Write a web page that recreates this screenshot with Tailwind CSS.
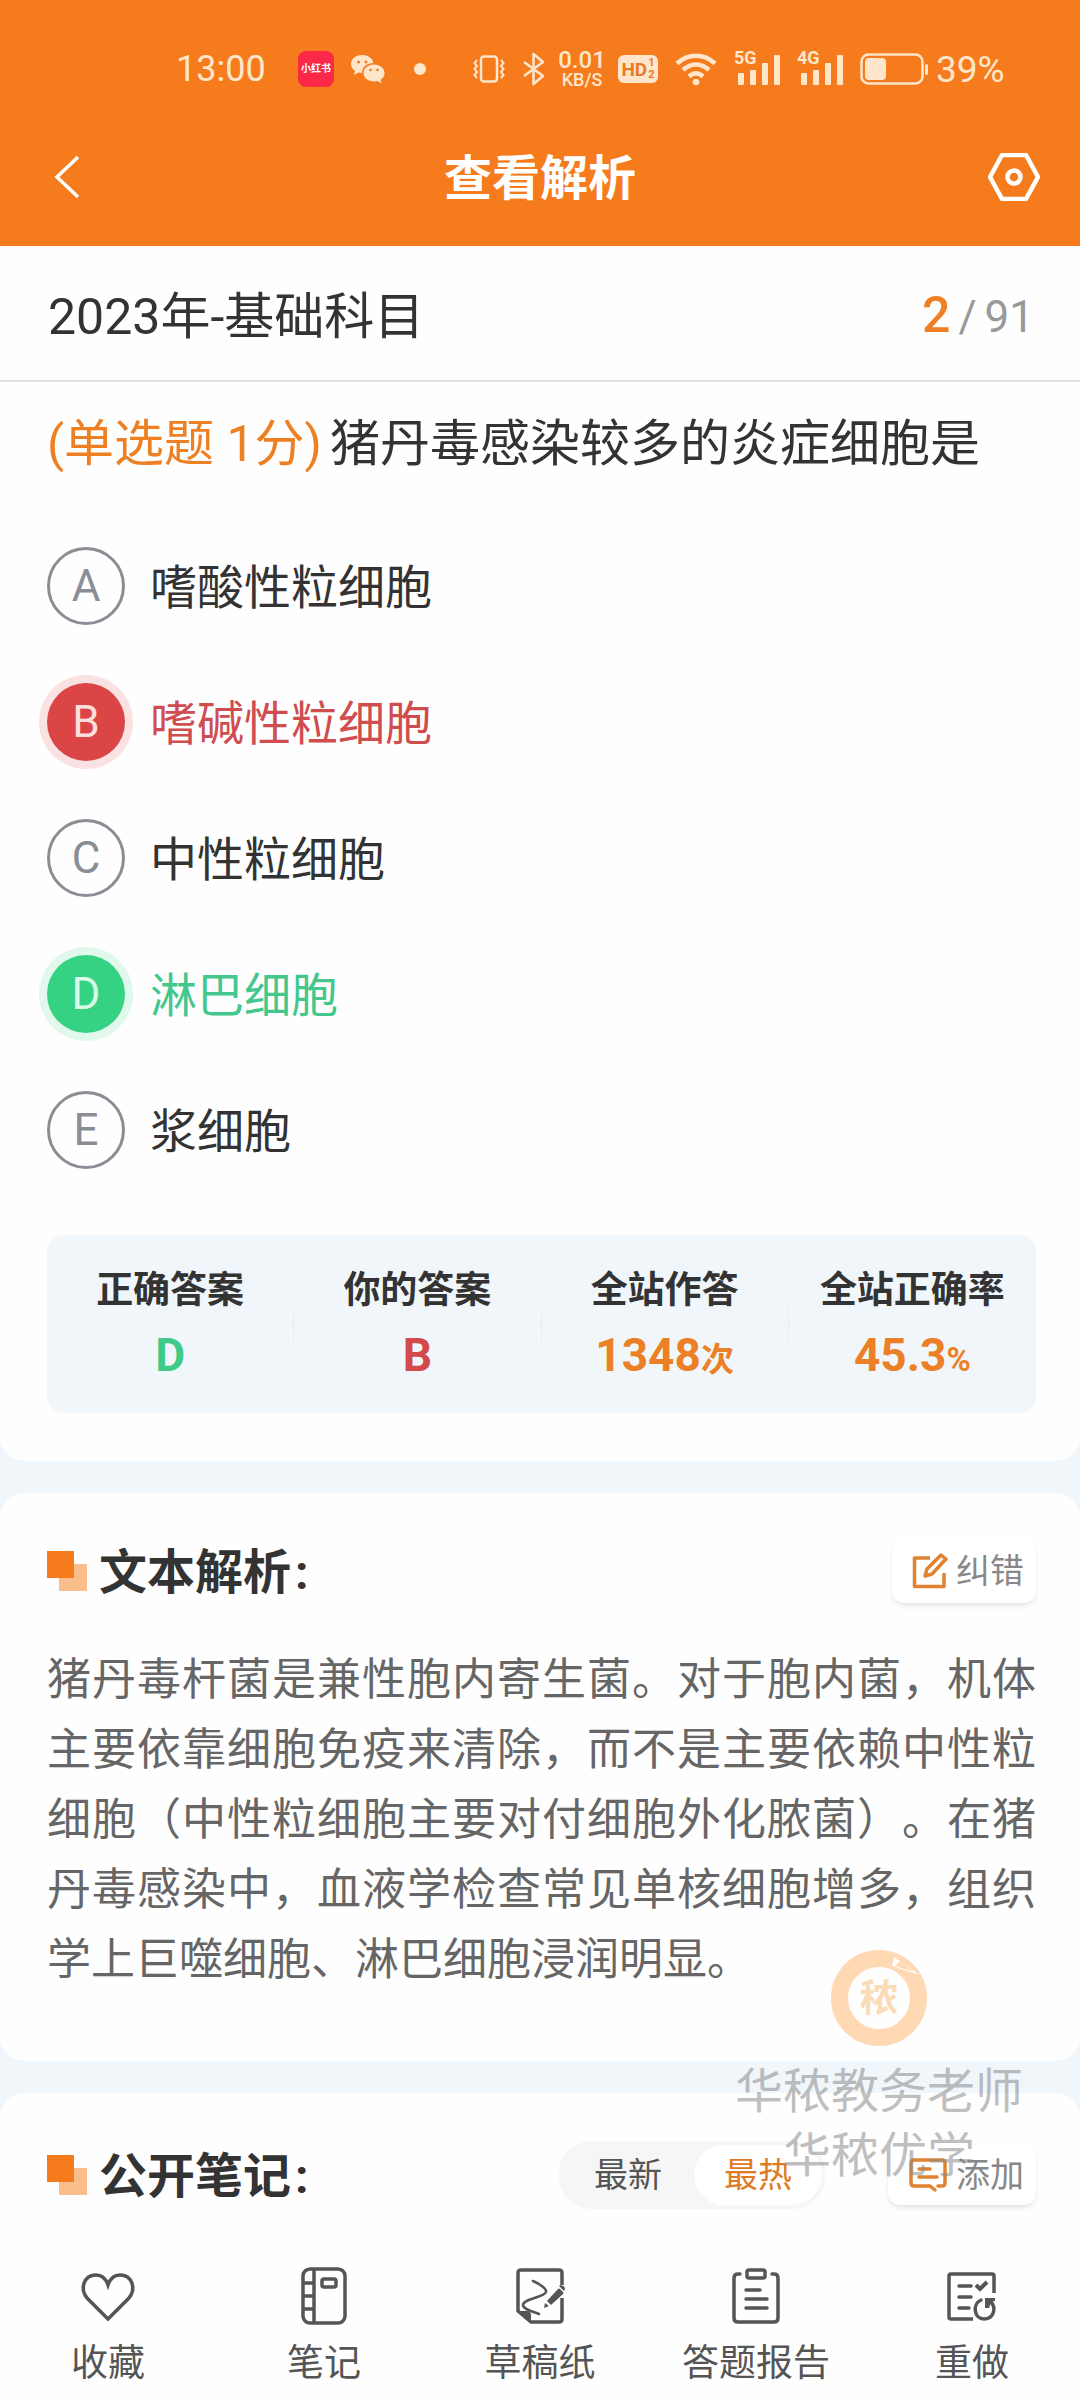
<!DOCTYPE html>
<html lang="zh-CN">
<head>
    <meta charset="UTF-8">
    <meta name="viewport" content="width=device-width, initial-scale=1.0">
    <title>查看解析</title>
    <script src="https://cdn.jsdelivr.net/npm/@tailwindcss/browser@4"></script>
</head>
<body class="relative min-h-screen flex flex-col bg-[#f0f6fa] text-[#333] font-[Roboto,'Noto_Sans_CJK_SC',sans-serif]">
    <header class="bg-[#f57b1d] pb-3">
        <!-- Status bar -->
        <div class="h-[120px] pt-[18px] pl-[176px] flex items-center text-[#ffe6cb]">
            <span class="w-[90px] text-[36px] leading-none">13:00</span>
            <span class="ml-8 size-9 rounded-lg bg-[#fb2848] flex items-center justify-center text-[10px] font-bold leading-none text-white whitespace-nowrap">小红书</span>
            <svg class="ml-4 w-9 h-8" viewBox="0 0 36 32" fill="currentColor">
                <path d="M12 2C5.500 2 1 6 1 11c0 3 1.500 5.200 4 7l-1 4 4.500-2.500c1.200.3 2.300.5 3.500.5C12 14 17 10 23.500 10 22.500 5 18 2 12 2z"/>
                <path d="M24 11.500c-6 0-10.500 3.700-10.500 8.500S18 28.500 24 28.500c1.200 0 2.500-.2 3.500-.5l4 2.500-1-3.500c2.500-1.700 4-4 4-7 0-4.800-4.500-8.500-10.500-8.500z"/>
                <g fill="#f57b1d"><circle cx="8.500" cy="9" r="1.500"/><circle cx="16" cy="9" r="1.500"/><circle cx="20.500" cy="17" r="1.300"/><circle cx="27.500" cy="17" r="1.300"/></g>
            </svg>
            <span class="ml-7 size-3 rounded-full bg-current"></span>
            <svg class="ml-[47px] w-8 h-7" viewBox="0 0 32 28" fill="none" stroke="currentColor" stroke-width="2.500">
                <rect x="8" y="1.500" width="16" height="25" rx="3"/>
                <path stroke-width="2" d="M4 5 1.500 8 4 11l-2.500 3L4 17l-2.500 3L4 23M28 5l2.500 3-2.500 3 2.500 3-2.500 3 2.500 3-2.500 3"/>
            </svg>
            <svg class="ml-[17px] w-6 h-[34px]" viewBox="0 0 24 34" fill="none" stroke="currentColor" stroke-width="2.600" stroke-linejoin="round">
                <path d="M2 10l19 14-9.500 8V2L21 10 2 24"/>
            </svg>
            <span class="ml-3 w-12 flex flex-col items-center font-medium"><span class="text-[24px] leading-[22px]">0.01</span><span class="text-[18px] leading-[18px]">KB/S</span></span>
            <span class="ml-3 h-7 w-10 rounded-md bg-[#ffe6cb] flex items-center justify-center gap-px font-bold text-[#e87b28]">
                <span class="text-[19px] leading-none">HD</span>
                <span class="flex flex-col text-[11px] leading-[12px]"><span>1</span><span>2</span></span>
            </span>
            <svg class="ml-4 w-11 h-9" viewBox="0 0 44 36" fill="none" stroke="currentColor" stroke-width="4.500">
                <path d="M3 12.500c11-10.500 27-10.500 38 0M9 19c8-7.500 18-7.500 26 0M15 25.500c4.500-4 9.500-4 14 0"/>
                <circle cx="22" cy="31" r="3.300" fill="currentColor" stroke="none"/>
            </svg>
            <span class="relative ml-4 w-[47px] h-8">
                <span class="absolute -top-1 left-0 text-[18px] leading-none font-bold">5G</span>
                <svg class="w-full h-full" viewBox="0 0 47 32" fill="currentColor"><rect x="4" y="20" width="6" height="12" rx="1"/><rect x="16" y="17" width="6" height="15" rx="1"/><rect x="28" y="10" width="6" height="22" rx="1"/><rect x="40" y="2" width="6" height="30" rx="1"/></svg>
            </span>
            <span class="relative ml-4 w-[47px] h-8">
                <span class="absolute -top-1 left-0 text-[18px] leading-none font-bold">4G</span>
                <svg class="w-full h-full" viewBox="0 0 47 32" fill="currentColor"><rect x="4" y="20" width="6" height="12" rx="1"/><rect x="16" y="17" width="6" height="15" rx="1"/><rect x="28" y="10" width="6" height="22" rx="1"/><rect x="40" y="2" width="6" height="30" rx="1"/></svg>
            </span>
            <svg class="ml-4 w-[68px] h-8" viewBox="0 0 68 32">
                <rect x="1.500" y="1.500" width="61" height="29" rx="7" fill="none" stroke="currentColor" stroke-width="2.500"/>
                <rect x="5" y="5" width="21" height="22" rx="4" fill="currentColor"/>
                <rect x="65" y="11" width="3" height="11" rx="1.500" fill="currentColor"/>
            </svg>
            <span class="ml-2 text-[37px] leading-none">39%</span>
        </div>
        <!-- Title bar -->
        <div class="h-[114px] px-10 flex items-center justify-between text-white">
            <button type="button" aria-label="返回" class="w-[52px]">
                <svg class="w-12 h-12" viewBox="0 0 48 48" fill="none" stroke="currentColor" stroke-width="3.500"><path d="M38 4 17 24l21 20"/></svg>
            </button>
            <h1 class="pt-1 text-[48px] leading-none font-bold">查看解析</h1>
            <button type="button" aria-label="设置">
                <svg class="w-[52px] h-12" viewBox="0 0 52 48" fill="none" stroke="currentColor" stroke-width="4.500" stroke-linejoin="round"><path d="M14 2h24l12 22-12 22H14L2 24z"/><circle cx="26" cy="24" r="6.500"/></svg>
            </button>
        </div>
    </header>

    <main class="flex-1 flex flex-col gap-8">
        <section class="bg-[#fefefe] rounded-b-3xl pb-12">
            <div class="h-[136px] pt-1 pl-12 pr-[46px] flex items-center justify-between border-b-2 border-[#dfe0e2]">
                <h2 class="pt-1 text-[50px]">2023年-基础科目</h2>
                <p class="flex items-baseline gap-2 text-[44px] text-[#999]"><span class="text-[50px] font-medium text-[#ee8024]">2</span><span>/</span><span>91</span></p>
            </div>
            <div class="pl-[47px] pr-11">
                <h3 class="pt-[27px] text-[50px] leading-[70px]"><span class="mr-2 text-[#ee8024]">(单选题 1分)</span>猪丹毒感染较多的炎症细胞是</h3>
                <ul class="mt-[68px] flex flex-col gap-[58px] text-[47px]">
                    <li><button type="button" class="h-[78px] flex items-center gap-[25px]"><span class="size-[78px] rounded-full border-3 border-[#8b8d95] text-[#8b8d95] text-[44px] flex items-center justify-center">A</span><span class="pt-1">嗜酸性粒细胞</span></button></li>
                    <li><button type="button" class="h-[78px] flex items-center gap-[25px] text-[#cf4d4f]"><span class="size-[78px] rounded-full bg-[#dc4545] ring-8 ring-[#fbe2e2] text-[#fde0de] text-[44px] flex items-center justify-center">B</span><span class="pt-1">嗜碱性粒细胞</span></button></li>
                    <li><button type="button" class="h-[78px] flex items-center gap-[25px]"><span class="size-[78px] rounded-full border-3 border-[#8b8d95] text-[#8b8d95] text-[44px] flex items-center justify-center">C</span><span class="pt-1">中性粒细胞</span></button></li>
                    <li><button type="button" class="h-[78px] flex items-center gap-[25px] text-[#43c78c]"><span class="size-[78px] rounded-full bg-[#35d283] ring-8 ring-[#e1f8ec] text-[#d9fbe9] text-[44px] flex items-center justify-center">D</span><span class="pt-1">淋巴细胞</span></button></li>
                    <li><button type="button" class="h-[78px] flex items-center gap-[25px]"><span class="size-[78px] rounded-full border-3 border-[#8b8d95] text-[#8b8d95] text-[44px] flex items-center justify-center">E</span><span class="pt-1">浆细胞</span></button></li>
                </ul>
                <dl class="mt-[66px] pt-7 pb-[30px] rounded-2xl bg-[#f0f6fa] grid grid-cols-4 text-center font-bold">
                    <div class="h-[120px] border-r border-[#e9eff3] [border-image:linear-gradient(transparent_25%,#e4eaee_50%,transparent_80%)_1]"><dt class="h-16 text-[37px] leading-[56px]">正确答案</dt><dd class="h-14 text-[46px] leading-[56px] text-[#3fca88]">D</dd></div>
                    <div class="h-[120px] border-r border-[#e9eff3] [border-image:linear-gradient(transparent_25%,#e4eaee_50%,transparent_80%)_1]"><dt class="h-16 text-[37px] leading-[56px]">你的答案</dt><dd class="h-14 text-[46px] leading-[56px] text-[#d24a4c]">B</dd></div>
                    <div class="h-[120px] border-r border-[#e9eff3] [border-image:linear-gradient(transparent_25%,#e4eaee_50%,transparent_80%)_1]"><dt class="h-16 text-[37px] leading-[56px]">全站作答</dt><dd class="h-14 text-[46px] leading-[56px] text-[#ec8026]">1348<span class="text-[33px] leading-none">次</span></dd></div>
                    <div class="h-[120px]"><dt class="h-16 text-[37px] leading-[56px]">全站正确率</dt><dd class="h-14 text-[46px] leading-[56px] text-[#ec8026]">45.3<span class="text-[33px] leading-none">%</span></dd></div>
                </dl>
            </div>
        </section>

        <section class="bg-[#fefefe] rounded-3xl pl-[47px] pr-11 pt-[46px] pb-[66px]">
            <div class="h-16 flex items-center">
                <svg class="size-10" viewBox="0 0 40 40"><path fill="#fabd8c" d="M12 13h28v27H12z"/><path fill="#f57b1d" d="M0 0h27v27H0z"/></svg>
                <h2 class="pt-1 ml-3 text-[48px] font-bold">文本解析<span class="ml-1">:</span></h2>
                <button type="button" class="ml-auto h-16 pr-3 pl-5 rounded-xl bg-white shadow-md shadow-black/8 flex items-center gap-2 text-[34px] text-[#888]">
                    <svg class="size-9" viewBox="0 0 36 36" fill="none" stroke="#e08230" stroke-width="3.500" stroke-linejoin="round"><path d="M18 5H2.500v28.500H32V20M13 23l2-7L29 2l5 4-14 15z"/></svg>
                    纠错
                </button>
            </div>
            <p class="mt-[42px] text-[44px] leading-[70px] text-justify text-[#666] [text-spacing-trim:space-all]">猪丹毒杆菌是兼性胞内寄生菌。对于胞内菌，机体主要依靠细胞免疫来清除，而不是主要依赖中性粒细胞（中性粒细胞主要对付细胞外化脓菌）。在猪丹毒感染中，血液学检查常见单核细胞增多，组织学上巨噬细胞、淋巴细胞浸润明显。</p>
        </section>

        <section class="flex-1 bg-[#fefefe] rounded-t-3xl pl-[47px] pr-11 pt-12">
            <div class="h-[68px] flex items-center">
                <svg class="size-10" viewBox="0 0 40 40"><path fill="#fabd8c" d="M12 13h28v27H12z"/><path fill="#f57b1d" d="M0 0h27v27H0z"/></svg>
                <h2 class="pt-1 ml-3 text-[48px] font-bold">公开笔记<span class="ml-1">:</span></h2>
                <div class="ml-auto h-[68px] p-1 rounded-full bg-[#f6f6f7] flex text-[34px]">
                    <button type="button" class="px-8 rounded-full text-[#555]">最新</button>
                    <button type="button" class="px-[30px] rounded-full bg-white text-[#e07a22]">最热</button>
                </div>
                <button type="button" class="ml-[62px] h-[60px] pl-5 pr-3 rounded-xl bg-white shadow-md shadow-black/8 flex items-center gap-2 text-[34px] text-[#888]">
                    <svg class="size-10" viewBox="0 0 40 40" fill="none" stroke="#e08230" stroke-width="3.500" stroke-linecap="round" stroke-linejoin="round"><path d="M22 31H6q-3 0-3-3V8q0-3 3-3h28q3 0 3 3v20q0 3-3 3h-4M22 31l5 4M11 14h11M11 22h18"/></svg>
                    添加
                </button>
            </div>
        </section>
    </main>

    <!-- Bottom actions -->
    <nav class="fixed bottom-0 inset-x-0 h-[168px] pt-[34px] bg-[#fefefe] grid grid-cols-5 text-[37px] text-[#555]">
        <button type="button" class="flex flex-col items-center gap-[10px]">
            <svg class="size-[60px]" viewBox="0 0 60 60" fill="none" stroke="currentColor" stroke-width="3.500"><path d="M30 53 9.500 32.500C1 23 6 9 18 9c6 0 10 4 12 10 2-6 6-10 12-10 12 0 17 14 8.500 23.500z"/></svg>
            <span class="leading-[56px]">收藏</span>
        </button>
        <button type="button" class="flex flex-col items-center gap-[10px]">
            <svg class="size-[60px]" viewBox="0 0 60 60" fill="none" stroke="currentColor" stroke-width="3.500"><rect x="9" y="3" width="42" height="54" rx="7"/><path d="M20 3v54M9 17h11M9 30h11M9 43h11"/><rect x="28" y="13" width="14" height="8" rx="2"/></svg>
            <span class="leading-[56px]">笔记</span>
        </button>
        <button type="button" class="flex flex-col items-center gap-[10px]">
            <svg class="size-[60px]" viewBox="0 0 60 60" fill="none" stroke="currentColor" stroke-width="3.500"><path d="M52 19V7q0-3-3-3H11Q8 4 8 7v38l13 11h28q3 0 3-3V32"/><path fill="currentColor" stroke="none" d="M8 45h9q4 0 4 4v8zM37 35l11-12q1-1 2 0l3 3q1 1 0 2L41 39zM35 37l4 3-5 2zM49 20l2-1q4 1 4 4l-1 2z"/><path stroke-linecap="round" stroke-width="2.600" d="M23 15c7 3 14 8 13 11-1 5-23 7-23 13 0 4 8 6 16 9"/></svg>
            <span class="leading-[56px]">草稿纸</span>
        </button>
        <button type="button" class="flex flex-col items-center gap-[10px]">
            <svg class="size-[60px]" viewBox="0 0 60 60" fill="none" stroke="currentColor" stroke-width="3.500" stroke-linecap="round"><path d="M14 8h-2q-4 0-4 4v40q0 4 4 4h36q4 0 4-4V12q0-4-4-4h-2M20 24h14M20 33h21M20 42h21"/><rect x="21" y="4" width="18" height="8" rx="2"/></svg>
            <span class="leading-[56px]">答题报告</span>
        </button>
        <button type="button" class="flex flex-col items-center gap-[10px]">
            <svg class="size-[60px]" viewBox="0 0 60 60" fill="none" stroke="currentColor" stroke-width="3.500"><path d="M52 27V10q0-2-2-2H9q-2 0-2 2v41q0 2 2 2h22"/><path stroke-linecap="round" d="M17 20h12M17 31h12M17 42h10"/><path stroke-width="4" d="m34 19 4 4 7-7"/><path stroke-linecap="round" d="M39 34c-9 4-7 19 3 19 9 0 13-10 7-17"/><path fill="currentColor" stroke="none" d="M43 32h10v3l-4 1-2 6h-4z"/></svg>
            <span class="leading-[56px]">重做</span>
        </button>
    </nav>

    <!-- Watermark -->
    <div class="absolute bottom-[212px] right-[57px] z-10 flex flex-col items-center pointer-events-none text-[48px] leading-[64px] text-[#888]/55">
        <div class="relative size-24 mb-[14px] rounded-full border-[17px] border-[#ffd9b3] flex items-center justify-center text-[38px] font-bold text-[#fbdcb8]">
            秾
            <svg class="absolute -top-3 -right-3 w-8 h-7" viewBox="0 0 32 28"><path fill="#fff" d="M4 2 30 20 2 11z"/><path fill="#ffd9b3" d="M5 11 10 6l14 11z"/></svg>
        </div>
        <span>华秾教务老师</span>
        <span>华秾优学</span>
    </div>
</body>
</html>
